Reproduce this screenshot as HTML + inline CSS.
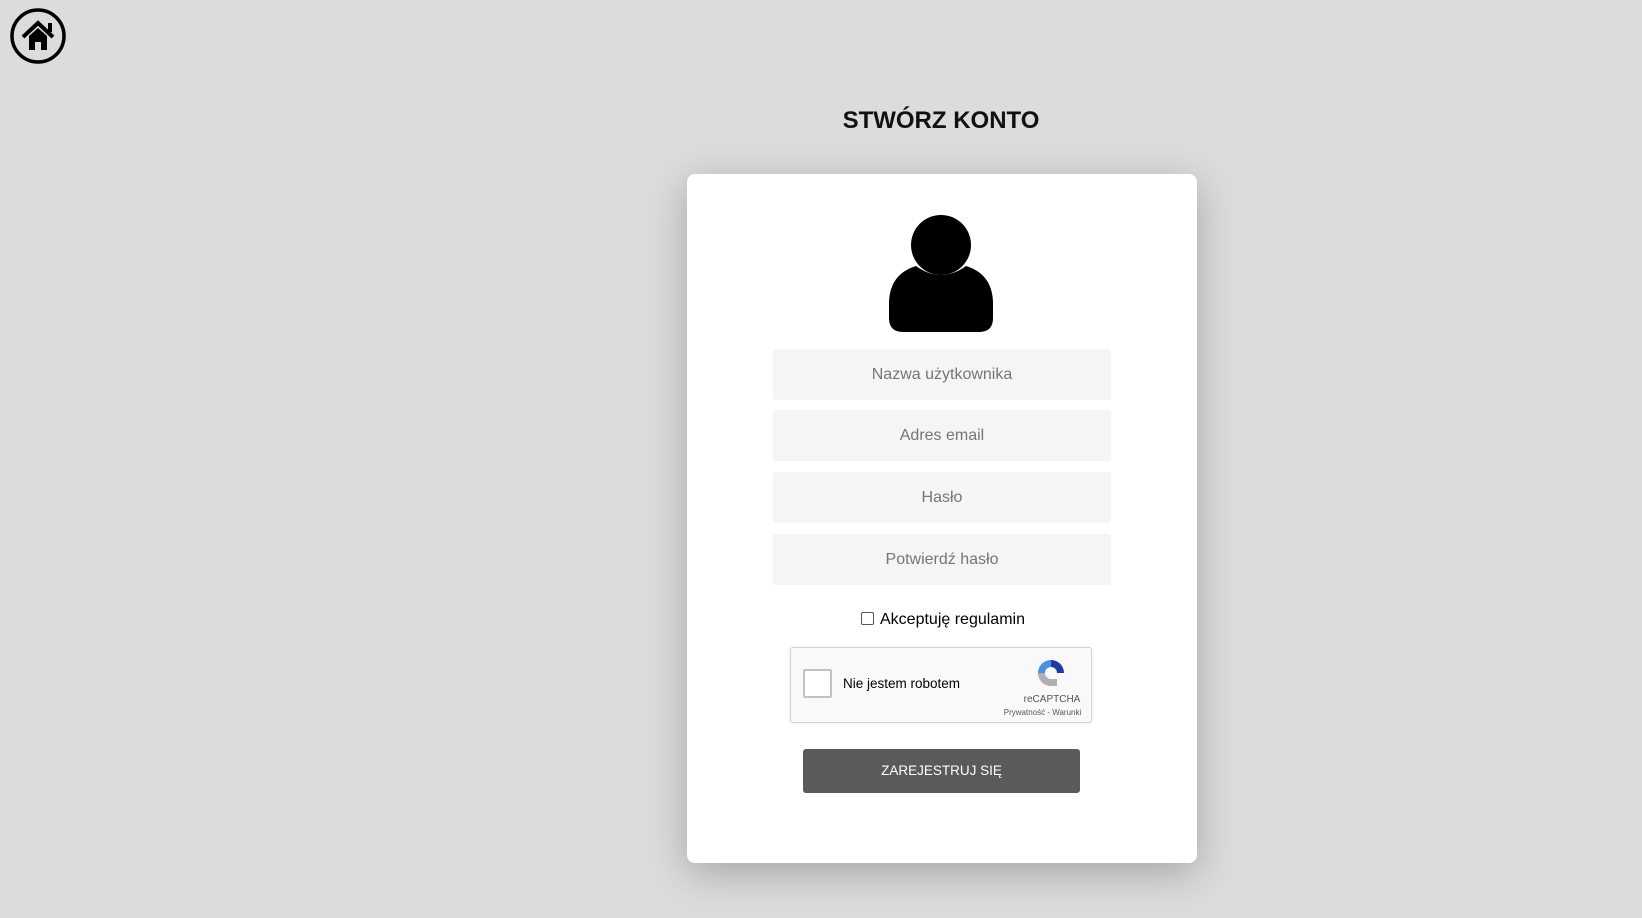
<!DOCTYPE html>
<html><head><meta charset="utf-8"><style>
html,body{margin:0;padding:0;width:1642px;height:918px;background:#dcdcdc;font-family:"Liberation Sans",Arial,sans-serif;overflow:hidden;position:relative}
.abs{position:absolute}
h1{position:absolute;left:741px;width:400px;top:107px;margin:0;text-align:center;font-size:24px;font-weight:bold;color:#111}
.card{left:687px;top:174px;width:510px;height:689px;background:#fff;border-radius:8px;box-shadow:0 10px 40px rgba(0,0,0,.25)}
.inp{left:773px;width:338px;height:51px;background:#f5f5f5;border-radius:3px;color:#757575;font-size:16px;text-align:center;line-height:51px}
.btn{left:803px;top:749px;width:277px;height:44px;background:#5a5a5a;border-radius:3px;color:#fff;font-size:13.5px;text-align:center;line-height:44px}
</style></head><body>
<svg class="abs" style="left:9px;top:7px" width="58" height="58" viewBox="0 0 58 58">
<circle cx="29" cy="29" r="26" fill="none" stroke="#000" stroke-width="3.5"/>
<path d="M14 30 L29 16 L44 30" fill="none" stroke="#000" stroke-width="4"/>
<rect x="39" y="16" width="4" height="9" fill="#000"/>
<path d="M20 29 L29 21 L38 29 L38 43 L32 43 L32 35 L26 35 L26 43 L20 43Z" fill="#000"/>
</svg>
<h1>STWÓRZ KONTO</h1>
<div class="abs card"></div>
<svg class="abs" style="left:886px;top:214px" width="110" height="118" viewBox="0 0 110 118">
<circle cx="55" cy="31" r="30" fill="#000"/>
<path d="M30 52 Q55 70 80 52 Q106 60 107 88 L107 104 Q107 118 93 118 L17 118 Q3 118 3 104 L3 88 Q4 60 30 52Z" fill="#000"/>
</svg>
<div class="abs inp" style="top:349px">Nazwa użytkownika</div>
<div class="abs inp" style="top:410px">Adres email</div>
<div class="abs inp" style="top:472px">Hasło</div>
<div class="abs inp" style="top:534px">Potwierdź hasło</div>
<div class="abs" style="left:861px;top:612px;width:11px;height:11px;border:1px solid #555;border-radius:2px;background:#fff"></div>
<div class="abs" style="left:880px;top:611px;font-size:16px;color:#000">Akceptuję regulamin</div>
<div class="abs" style="left:790px;top:647px;width:300px;height:74px;background:#f9f9f9;border:1px solid #d3d3d3;border-radius:3px;box-shadow:0 0 4px rgba(0,0,0,.08)"></div>
<div class="abs" style="left:803px;top:669px;width:25px;height:25px;border:2px solid #c1c1c1;border-radius:2px;background:#fff"></div>
<div class="abs" style="left:843px;top:676px;font-size:13.5px;color:#000">Nie jestem robotem</div>
<svg class="abs" style="left:1035px;top:657px" width="32" height="32" viewBox="0 0 32 32">
<path d="M16 3 A13 13 0 0 1 29 16 L22 16 A6 6 0 0 0 16 10Z" fill="#1c3aa9"/>
<path d="M3 16 A13 13 0 0 1 16 3 L16 10 A6 6 0 0 0 10 16Z" fill="#4a90e2"/>
<path d="M16 29 A13 13 0 0 1 3 16 L10 16 A6 6 0 0 0 16 22 L22 22 L22 29Z" fill="#b0b0b0"/>
</svg>
<div class="abs" style="left:1012px;top:694px;width:80px;text-align:center;font-size:10px;color:#555">reCAPTCHA</div>
<div class="abs" style="left:995px;top:708px;width:95px;text-align:center;font-size:8px;color:#555">Prywatność - Warunki</div>
<div class="abs btn">ZAREJESTRUJ SIĘ</div>
</body></html>
